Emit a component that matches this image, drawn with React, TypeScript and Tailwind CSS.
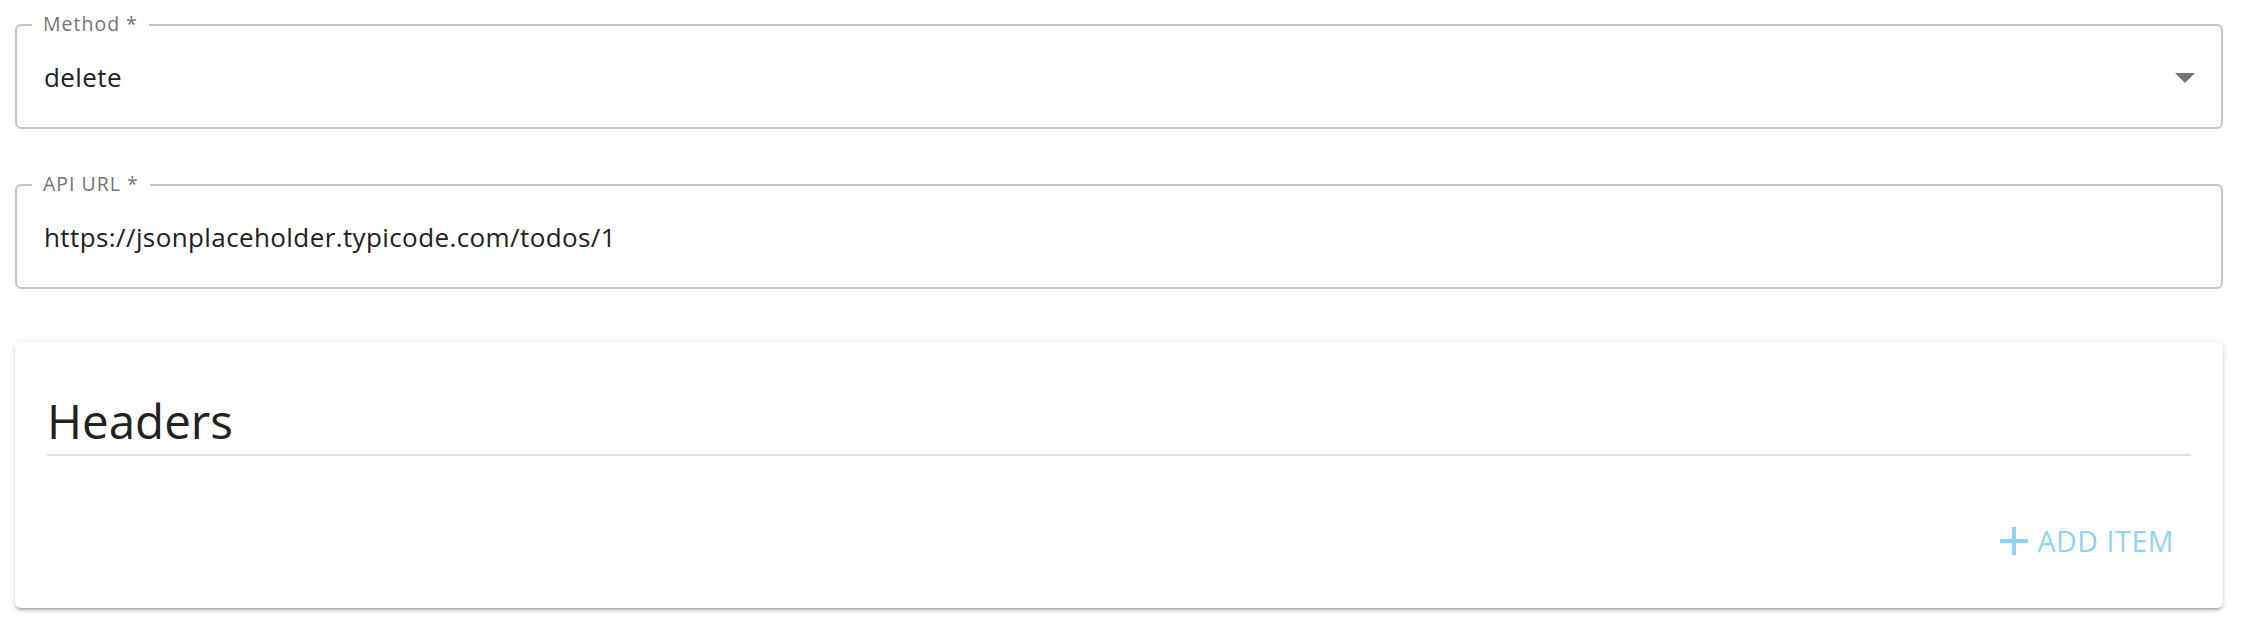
import type { ReactNode } from 'react'

function OutlinedField({ label, children }: { label: string; children: ReactNode }) {
  return (
    <div className="relative h-[105px] border-2 border-[#c4c4c4] rounded-[6px] flex items-center pl-[27px] pr-[12px]">
      <span className="absolute left-[15px] top-[-14px] px-[11px] bg-white text-[19.5px] leading-[24px] tracking-[1px] text-[#757575]">
        {label}
      </span>
      {children}
    </div>
  )
}

export default function App() {
  return (
    <div
      className="w-[2244px] h-[630px] bg-white text-[#212121]"
      style={{ fontFamily: '"Open Sans", "Noto Sans", sans-serif' }}
    >
      <div className="ml-[15px] w-[2208px] pt-[24px]">
        <OutlinedField label="Method *">
          <span className="flex-1 text-[26px] leading-[36px] tracking-[0.4px]">delete</span>
          <svg viewBox="0 0 24 24" className="w-[48px] h-[48px] fill-[#757575]">
            <path d="M7 10l5 5 5-5z" />
          </svg>
        </OutlinedField>

        <div className="mt-[55px]">
          <OutlinedField label="API URL *">
            <span className="flex-1 text-[26px] leading-[36px] tracking-[0.4px]">
              https://jsonplaceholder.typicode.com/todos/1
            </span>
          </OutlinedField>
        </div>

        <div className="mt-[53px] bg-white rounded-[6px] pt-[51px] px-[32px] pb-[43px] shadow-[0px_4px_2px_-3px_rgba(0,0,0,0.2),0px_3px_3px_0px_rgba(0,0,0,0.14),0px_1px_7px_0px_rgba(0,0,0,0.12)]">
          <h2 className="text-[47.5px] leading-[56px] font-normal">Headers</h2>
          <div className="mt-[5px] h-[2px] bg-[#e0e0e0]" />
          <div className="mt-[61px] flex justify-end pr-[17px]">
            <button className="flex items-center text-[#8fd4f5]">
              <svg viewBox="0 0 24 24" className="w-[48px] h-[48px] fill-[#8fd4f5]">
                <path d="M19 13h-6v6h-2v-6H5v-2h6V5h2v6h6v2z" />
              </svg>
              <span className="text-[28.5px] leading-[40px] tracking-[0.02em]">ADD ITEM</span>
            </button>
          </div>
        </div>
      </div>
    </div>
  )
}
